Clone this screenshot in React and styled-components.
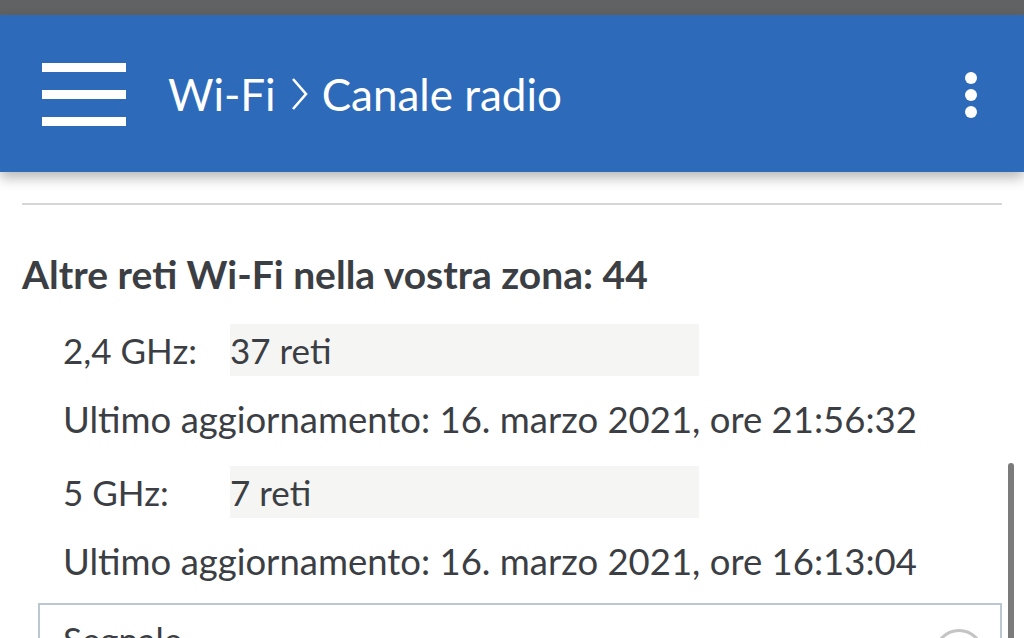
import React from "react";
import styled, { createGlobalStyle } from "styled-components";

const Global = createGlobalStyle`
  html, body { margin: 0; padding: 0; background: #ffffff; overflow: hidden; }
  body { font-family: "Lato", "Noto Sans", sans-serif; color: #3b3e43; }
  * { box-sizing: border-box; }
`;

const Page = styled.div`
  position: relative;
  width: 1024px;
  height: 638px;
  overflow: hidden;
  background: #ffffff;
`;

const StatusStrip = styled.div`
  height: 15px;
  background: #616263;
`;

const Header = styled.header`
  position: relative;
  z-index: 1;
  height: 157px;
  background: #2d6bba;
  display: flex;
  align-items: center;
  padding: 0 47px 0 42px;
  box-shadow: 0 6px 12px rgba(0, 0, 0, 0.28);
`;

const MenuButton = styled.div`
  width: 84px;
  height: 63px;
  display: flex;
  flex-direction: column;
  justify-content: space-between;
  margin-top: 2px;
`;

const MenuBar = styled.span`
  display: block;
  height: 9px;
  background: #ffffff;
`;

const Title = styled.h1`
  flex: 1;
  margin: 0 0 0 42px;
  display: flex;
  align-items: center;
  font-size: 44px;
  font-weight: 400;
  color: #ffffff;
  white-space: nowrap;
`;

const Chevron = styled.svg`
  width: 17px;
  height: 34px;
  margin: 0 14px 0 15px;
  flex: none;
`;

const MoreButton = styled.div`
  width: 12px;
  display: flex;
  flex-direction: column;
  gap: 5px;
  margin-top: 2px;
`;

const Dot = styled.span`
  display: block;
  width: 12px;
  height: 12px;
  border-radius: 50%;
  background: #ffffff;
`;

const Content = styled.main`
  padding: 31px 22px 0;
`;

const Divider = styled.hr`
  margin: 0;
  border: none;
  height: 2px;
  background: #d6d6d6;
`;

const Heading = styled.h2`
  margin: 44px 0 0;
  height: 50px;
  line-height: 50px;
  font-size: 39px;
  font-weight: 700;
  color: #3b3e43;
  white-space: nowrap;
`;

const Bands = styled.section`
  margin-top: 25px;
  padding-left: 41px;
  display: flex;
  flex-direction: column;
  gap: 21px;
`;

const Band = styled.div`
  display: flex;
  flex-direction: column;
  gap: 17px;
`;

const BandRow = styled.div`
  display: flex;
  align-items: center;
  height: 52px;
`;

const BandLabel = styled.span`
  width: 167px;
  font-size: 35px;
  white-space: nowrap;
`;

const BandValue = styled.span`
  width: 469px;
  height: 52px;
  line-height: 52px;
  background: #f5f5f4;
  font-size: 35px;
  white-space: nowrap;
`;

const Updated = styled.div`
  height: 52px;
  line-height: 52px;
  font-size: 36.5px;
  white-space: nowrap;
`;

const SignalCard = styled.section`
  margin: 16px 0 0 16px;
  height: 80px;
  border: 2px solid #bcc8d0;
  display: flex;
  justify-content: space-between;
  padding: 14px 16px 0 23px;
`;

const SignalTitle = styled.span`
  font-size: 35px;
  line-height: 40px;
`;

const SignalIcon = styled.span`
  width: 50px;
  height: 50px;
  margin-top: 10px;
  border-radius: 50%;
  border: 3px solid #c4c4c4;
`;

const ScrollThumb = styled.div`
  position: absolute;
  right: 10px;
  top: 463px;
  width: 6px;
  height: 200px;
  border-radius: 3px;
  background: #7b7b7b;
`;

const bands = [
  { label: "2,4 GHz:", value: "37 reti", updated: "Ultimo aggiornamento: 16. marzo 2021, ore 21:56:32" },
  { label: "5 GHz:", value: "7 reti", updated: "Ultimo aggiornamento: 16. marzo 2021, ore 16:13:04" },
];

export default function App() {
  return (
    <Page>
      <Global />
      <StatusStrip />
      <Header>
        <MenuButton>
          <MenuBar />
          <MenuBar />
          <MenuBar />
        </MenuButton>
        <Title>
          Wi-Fi
          <Chevron viewBox="0 0 17 34">
            <path d="M2 2 L15 17 L2 32" fill="none" stroke="#ffffff" strokeWidth="2.6" />
          </Chevron>
          Canale radio
        </Title>
        <MoreButton>
          <Dot />
          <Dot />
          <Dot />
        </MoreButton>
      </Header>
      <Content>
        <Divider />
        <Heading>Altre reti Wi-Fi nella vostra zona: 44</Heading>
        <Bands>
          {bands.map((b) => (
            <Band key={b.label}>
              <BandRow>
                <BandLabel>{b.label}</BandLabel>
                <BandValue>{b.value}</BandValue>
              </BandRow>
              <Updated>{b.updated}</Updated>
            </Band>
          ))}
        </Bands>
        <SignalCard>
          <SignalTitle>Segnale</SignalTitle>
          <SignalIcon />
        </SignalCard>
      </Content>
      <ScrollThumb />
    </Page>
  );
}
